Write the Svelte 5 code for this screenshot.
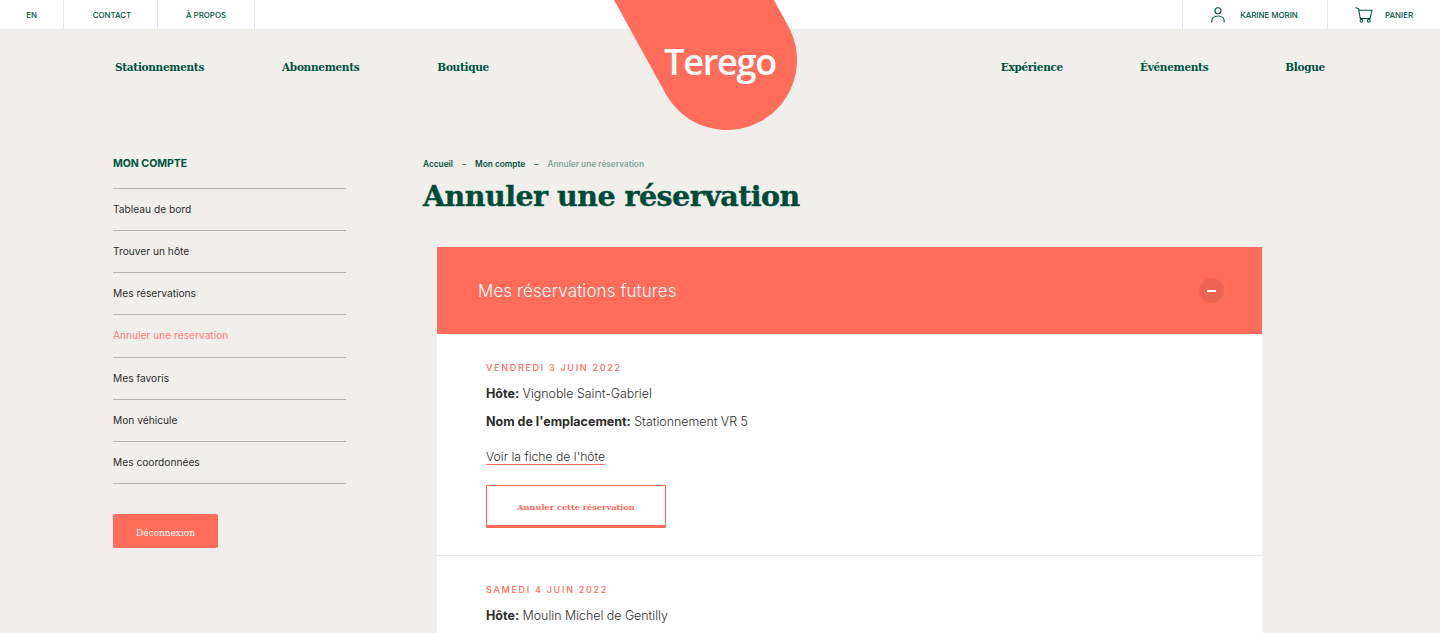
<script>
const topLeft = ["EN", "CONTACT", "À PROPOS"]
const navLeft = ["Stationnements", "Abonnements", "Boutique"]
const navRight = ["Expérience", "Événements", "Blogue"]
const sideLinks = [
	{ label: "Tableau de bord" },
	{ label: "Trouver un hôte" },
	{ label: "Mes réservations" },
	{ label: "Annuler une réservation", active: true },
	{ label: "Mes favoris" },
	{ label: "Mon véhicule" },
	{ label: "Mes coordonnées" }
]
</script>

<div class="page">
	<header class="top">
		<div class="top_group">
			{#each topLeft as item, i}
				<a class="top_cell cell_{i}" href="#top">{item}</a>
			{/each}
		</div>
		<div class="top_group">
			<a class="top_cell user" href="#top">
				<svg width="14" height="16" viewBox="0 0 14 16" fill="none" stroke="#005240" stroke-width="1.1">
					<circle cx="7" cy="3.800" r="3" />
					<path d="M0.800 15.500v-1.500c0-2.800 2.500-5 6.200-5s6.200 2.200 6.200 5v1.500" />
				</svg>
				<span>KARINE MORIN</span>
			</a>
			<a class="top_cell cart" href="#top">
				<svg width="18" height="16" viewBox="0 0 18 16" fill="none" stroke="#005240" stroke-width="1.1">
					<path d="M0.500 0.500l3 1.300 1.800 9.700h9.700l2-8.200H3.800" />
					<circle cx="6.500" cy="13.800" r="1.400" />
					<circle cx="13.800" cy="13.800" r="1.400" />
				</svg>
				<span>PANIER</span>
			</a>
		</div>
	</header>

	<svg class="logo_shape" width="200" height="131" viewBox="600 0 200 131">
		<line x1="672" y1="-40" x2="727" y2="60" stroke="#ff6c5a" stroke-width="140" stroke-linecap="round" />
	</svg>
	<div class="logo_text">Terego</div>

	<nav class="nav">
		<div class="nav_group">
			{#each navLeft as item}
				<a href="#top">{item}</a>
			{/each}
		</div>
		<div class="nav_group right">
			{#each navRight as item}
				<a href="#top">{item}</a>
			{/each}
		</div>
	</nav>

	<main class="main">
		<aside class="side">
			<h2>MON COMPTE</h2>
			<ul>
				{#each sideLinks as link}
					<li class:active={link.active}>{link.label}</li>
				{/each}
			</ul>
			<button class="logout">Déconnexion</button>
		</aside>

		<section class="content">
			<div class="crumbs">
				<span>Accueil</span><i>–</i><span>Mon compte</span><i>–</i><span class="current">Annuler une réservation</span>
			</div>
			<h1>Annuler une réservation</h1>

			<div class="card">
				<div class="card_head">
					<span>Mes réservations futures</span>
					<div class="minus"><b></b></div>
				</div>
				<div class="resa">
					<div class="date">VENDREDI 3 JUIN 2022</div>
					<p><strong>Hôte:</strong> Vignoble Saint-Gabriel</p>
					<p><strong>Nom de l'emplacement:</strong> Stationnement VR 5</p>
					<a class="sheet" href="#top">Voir la fiche de l'hôte</a>
					<button class="cancel">Annuler cette réservation</button>
				</div>
				<div class="resa">
					<div class="date">SAMEDI 4 JUIN 2022</div>
					<p><strong>Hôte:</strong> Moulin Michel de Gentilly</p>
				</div>
			</div>
		</section>
	</main>
</div>

<style>
:global(body) {
	margin: 0;
	background: #f0efeb;
}
.page {
	position: relative;
	height: 633px;
	overflow: hidden;
	font-family: Inter, "Liberation Sans", sans-serif;
	color: #2d2d2d;
}
a {
	color: inherit;
	text-decoration: none;
}
.top {
	display: flex;
	justify-content: space-between;
	height: 29px;
	background: #fff;
	color: #005240;
	font-size: 7.900px;
	font-weight: 500;
}
.top_group {
	display: flex;
}
.top_cell {
	display: flex;
	align-items: center;
	justify-content: center;
	box-sizing: border-box;
	border-right: 1px solid #e6e6e6;
}
.cell_0 { width: 64px; }
.cell_1 { width: 94px; padding-left: 3px; }
.cell_2 { width: 97px; }
.user {
	width: 145px;
	gap: 15px;
	padding-right: 1px;
	border-right: 0;
	border-left: 1px solid #e6e6e6;
}
.cart {
	width: 113px;
	gap: 12px;
	border-right: 0;
	border-left: 1px solid #e6e6e6;
}
.logo_shape {
	position: absolute;
	left: 600px;
	top: 0;
}
.logo_text {
	position: absolute;
	left: 664px;
	top: 40px;
	color: #fff;
	font-family: "Open Sans", sans-serif;
	font-size: 36px;
	font-weight: 600;
	line-height: 44px;
	letter-spacing: -1.200px;
}
.nav {
	display: flex;
	justify-content: space-between;
	padding: 30px 115px 0;
	color: #005240;
	font-family: "DejaVu Serif", serif;
	font-size: 10.500px;
	font-weight: 700;
	letter-spacing: -0.300px;
	line-height: 16px;
}
.nav_group {
	display: flex;
	gap: 78px;
}
.nav_group.right {
	gap: 77px;
}
.main {
	display: flex;
	padding: 82px 0 0 113px;
}
.side {
	flex: 0 0 233px;
	margin-right: 77px;
}
.side h2 {
	margin: 0;
	padding-bottom: 17px;
	border-bottom: 1px solid #b5b3ae;
	color: #005240;
	font-size: 10.500px;
	font-weight: 700;
	line-height: 14px;
}
.side ul {
	margin: 0;
	padding: 0;
	list-style: none;
}
.side li {
	box-sizing: border-box;
	height: 42.150px;
	border-bottom: 1px solid #b5b3ae;
	font-size: 10.200px;
	line-height: 41px;
}
.side li.active {
	color: #ff7f70;
}
.logout {
	display: block;
	width: 105px;
	height: 34px;
	margin-top: 30px;
	padding: 4px 0 0;
	border: 0;
	border-radius: 2px;
	background: #ff6c5a;
	color: #fff;
	font-family: "DejaVu Serif", serif;
	font-size: 9px;
}
.content {
	flex: 0 0 839px;
}
.crumbs {
	display: flex;
	height: 14px;
	align-items: center;
	color: #005240;
	font-size: 8.300px;
	font-weight: 600;
}
.crumbs i {
	margin: 0 9px;
	font-style: normal;
	font-weight: 400;
}
.crumbs .current {
	color: #7fa89c;
}
h1 {
	margin: 6px 0 0;
	color: #004b38;
	font-family: "DejaVu Serif", serif;
	font-size: 28.500px;
	font-weight: 700;
	letter-spacing: -0.520px;
	line-height: 38px;
	-webkit-text-stroke: 0.4px #004b38;
}
.card {
	margin: 32px 0 0 14px;
	background: #fff;
}
.card_head {
	display: flex;
	align-items: center;
	justify-content: space-between;
	height: 87px;
	padding: 0 38px 0 41px;
	background: #ff6c5a;
	color: #fff;
	font-size: 17px;
	font-weight: 300;
	letter-spacing: 0.100px;
}
.minus {
	display: flex;
	align-items: center;
	justify-content: center;
	width: 25px;
	height: 25px;
	border-radius: 50%;
	background: #ec6453;
}
.minus b {
	width: 9px;
	height: 2px;
	background: #fff;
}
.resa {
	padding: 27px 49px 27px;
	border-bottom: 1px solid #e8e8e6;
}
.date {
	color: #ff6c5a;
	font-size: 9px;
	font-weight: 500;
	letter-spacing: 1.700px;
	line-height: 13px;
}
p {
	margin: 11px 0 0;
	font-size: 12.400px;
	font-weight: 300;
	line-height: 17px;
}
strong {
	font-size: 12.500px;
	font-weight: 700;
}
.sheet {
	display: table;
	margin-top: 19px;
	border-bottom: 1px solid #ff6c5a;
	font-size: 12.200px;
	font-weight: 300;
	line-height: 15px;
}
.cancel {
	display: block;
	box-sizing: border-box;
	width: 180px;
	height: 43px;
	margin-top: 20px;
	padding: 3px 0 0;
	border: 1px solid #ff6c5a;
	border-bottom-width: 3px;
	background: #fff;
	color: #ff6c5a;
	font-family: "DejaVu Serif", serif;
	font-size: 8.200px;
	font-weight: 700;
}
</style>
